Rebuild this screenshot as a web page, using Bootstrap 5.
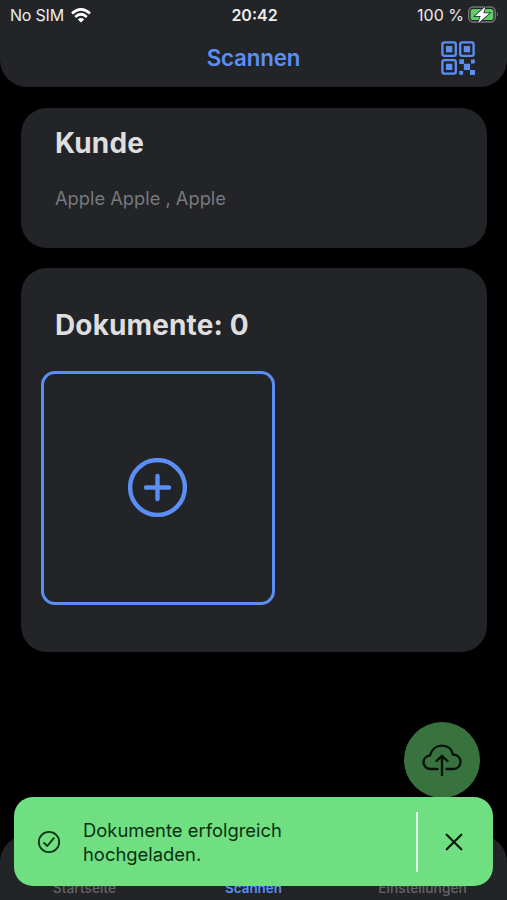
<!DOCTYPE html>
<html lang="de">
<head>
<meta charset="utf-8">
<meta name="viewport" content="width=device-width, initial-scale=1">
<title>Scannen</title>
<link href="https://cdn.jsdelivr.net/npm/bootstrap@5.3.0/dist/css/bootstrap.min.css" rel="stylesheet">
<style>
  :root { --accent: #5b8ff5; --surface: #222427; }
  body { font-family: Inter, "Liberation Sans", sans-serif; background: #000; color: #dedede; }
  .screen { height: 900px; max-width: 507px; }
  .surface { background: var(--surface); }
  .app-header { height: 87px; border-radius: 0 0 27px 27px; }
  .status-bar { height: 30px; padding: 0 8px 0 10px; font-size: 16px; color: #ececec; line-height: 30px; }
  .status-bar .side { flex: 1 1 0; }
  .carrier { letter-spacing: -.2px; }
  .wifi { margin-left: 7px; }
  .clock { font-weight: 600; }
  .title-bar { height: 57px; padding: 0 31px; display: grid; grid-template-columns: 1fr auto 1fr; }
  .page-title { font-size: 22.3px; font-weight: 600; letter-spacing: -.15px; color: var(--accent); line-height: 1; }
  .content { padding: 21px 20px 0 21px; }
  .panel { border: 0; border-radius: 26px; color: inherit; }
  .panel-title { font-size: 28px; font-weight: 700; line-height: 34px; letter-spacing: .12px; }
  .customer-panel { height: 140px; padding: 18px 34px; }
  .customer-name { font-size: 18.3px; line-height: 24px; color: #77797c; margin-top: 26px; }
  .document-panel { height: 384px; padding: 40px 20px; margin-top: 20px; }
  .document-panel .panel-title { padding-left: 14px; }
  .add-tile { width: 234px; height: 234px; border: 3px solid var(--accent); border-radius: 14px; margin-top: 29px; padding: 0 1px 1px 0; color: var(--accent); background: transparent; }
  .upload-button { width: 76px; height: 76px; background: #38733f; margin: 0 27px 37px 0; border: 0; }
  .tab-bar { height: 65px; border-radius: 27px 27px 0 0; padding-bottom: 3px; font-size: 13.8px; font-weight: 500; line-height: 18px; color: #626467; }
  .tab-bar .active-tab { color: var(--accent); font-size: 13.4px; font-weight: 600; }
  .upload-toast { left: 14px; right: 14px; top: 797px; height: 89px; border-radius: 19px; background: #70df82; color: #0b3012; }
  .check { margin-left: 23px; }
  .toast-message { font-size: 18.4px; line-height: 24px; margin-left: 22px; }
  .toast-rule { width: 2px; height: 60px; background: #e4fbe7; }
  .dismiss { margin: 0 30px 0 27px; }
  svg { display: block; flex: none; }
</style>
</head>
<body>
<div class="screen position-relative d-flex flex-column overflow-hidden mx-auto">
  <header class="app-header surface">
    <div class="status-bar d-flex align-items-center">
      <div class="side d-flex align-items-center">
        <span class="carrier">No SIM</span>
        <svg class="wifi" width="20" height="15" viewBox="0 0 20 15" fill="none" stroke="#fff" stroke-width="2.7">
          <path d="M1 5.4Q10-2.6 19 5.4M4.2 8.9Q10 3.6 15.8 8.9"/>
          <path d="M10 14.6L6.8 11.4Q10 8.6 13.2 11.4Z" fill="#fff" stroke="none"/>
        </svg>
      </div>
      <span class="clock">20:42</span>
      <div class="side d-flex align-items-center justify-content-end">
        <span>100 %</span>
        <svg class="ms-1" width="31" height="18" viewBox="0 0 31 18">
          <rect x=".7" y="1" width="26.6" height="15" rx="4.5" fill="none" stroke="#737578" stroke-width="1.4"/>
          <rect x="2.6" y="3" width="22.8" height="11" rx="2.6" fill="#5dce66"/>
          <path d="M28.8 6Q31 8.5 28.8 11Z" fill="#737578"/>
          <path d="M17.5 .5L7 9.9H12.6L10.2 17.3L21.4 7.2H15.4Z" fill="#fff" stroke="#222427" stroke-width="1.5" paint-order="stroke"/>
        </svg>
      </div>
    </div>
    <div class="title-bar align-items-center">
      <span></span>
      <h1 class="page-title mb-0">Scannen</h1>
      <svg class="ms-auto" width="35" height="36" viewBox="0 0 35 36" fill="#5b8ff5">
        <g fill="none" stroke="#5b8ff5" stroke-width="2.3">
          <rect x="1.4" y="1.4" width="13.4" height="13.4" rx="1.8"/>
          <rect x="19.2" y="1.4" width="13.4" height="13.4" rx="1.8"/>
          <rect x="1.4" y="19.2" width="13.4" height="13.4" rx="1.8"/>
        </g>
        <path d="M5 5h6.3v6.3H5zM22.8 5h6.3v6.3h-6.3zM5 22.8h6.3v6.3H5zM22.8 22.8h6.3v6.3h-6.3zM18.3 18.3h4.7v4.7h-4.7zM30 18.6h3.8v3.8H30zM18.3 30h3.8v3.8h-3.8zM29 29h5v5h-5z"/>
      </svg>
    </div>
  </header>

  <main class="content flex-grow-1 d-flex flex-column">
    <section class="card panel surface customer-panel">
      <h2 class="panel-title mb-0">Kunde</h2>
      <p class="customer-name mb-0">Apple Apple , Apple</p>
    </section>
    <section class="card panel surface document-panel">
      <h2 class="panel-title mb-0">Dokumente: 0</h2>
      <button class="add-tile d-flex align-items-center justify-content-center" aria-label="Dokument hinzufügen">
        <svg width="60" height="60" viewBox="0 0 60 60" fill="none" stroke="currentColor" stroke-width="4.4" stroke-linecap="round">
          <circle cx="29.5" cy="29.5" r="27.4"/><path d="M18 29.5H41M29.5 18V41"/>
        </svg>
      </button>
    </section>
  </main>

  <button class="upload-button rounded-circle align-self-end flex-shrink-0 d-flex align-items-center justify-content-center p-0" aria-label="Hochladen">
    <svg width="40" height="32" viewBox="0 0 40 32" fill="none" stroke="#071209" stroke-width="2.4" stroke-linecap="round" stroke-linejoin="round">
      <path d="M15.5 25H9C4.5 25 1.5 22 1.5 18.2C1.5 14.7 4.2 12 8 11.4C9.5 5.7 14 1.6 20 1.6C26 1.6 30 5.2 31 10.5C35.8 10.8 38.5 13.8 38.5 17.8C38.5 22 35.5 25 31.5 25H24.5"/>
      <path d="M20 31V12M14.5 17L20 11.8L25.5 17"/>
    </svg>
  </button>

  <nav class="tab-bar surface flex-shrink-0 d-flex align-items-end text-center">
    <span class="col-4">Startseite</span>
    <span class="col-4 active-tab">Scannen</span>
    <span class="col-4">Einstellungen</span>
  </nav>

  <div class="upload-toast position-absolute d-flex align-items-center" role="status">
    <svg class="check" width="24" height="24" viewBox="0 0 24 24" fill="none" stroke="#0b3012" stroke-width="1.8" stroke-linecap="round" stroke-linejoin="round">
      <circle cx="12" cy="12" r="10.2"/><path d="M7 12.8L10.3 16L16.8 8.2"/>
    </svg>
    <div class="toast-message">Dokumente erfolgreich<br>hochgeladen.</div>
    <div class="toast-rule ms-auto"></div>
    <svg class="dismiss" width="18" height="18" viewBox="0 0 18 18" fill="none" stroke="#071b0a" stroke-width="2.2" stroke-linecap="round">
      <path d="M1.7 1.7L16.3 16.3M16.3 1.7L1.7 16.3"/>
    </svg>
  </div>
</div>
<script src="https://cdn.jsdelivr.net/npm/bootstrap@5.3.0/dist/js/bootstrap.bundle.min.js"></script>
</body>
</html>
